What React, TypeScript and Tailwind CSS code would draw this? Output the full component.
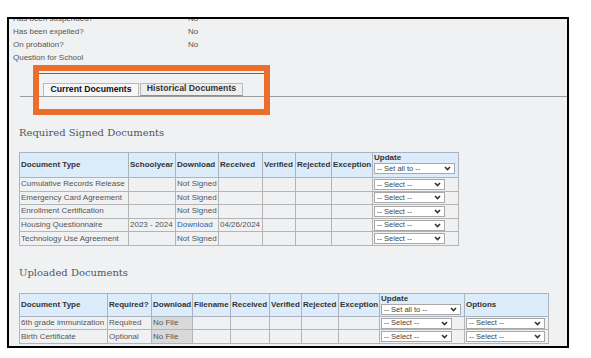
import React from 'react';

const FONT = { fontFamily: '"Liberation Sans", Arial, sans-serif' };

function Chevron() {
  return (
    <svg width="7" height="5" viewBox="0 0 7 5" className="shrink-0">
      <path d="M1 1 L3.5 3.5 L6 1" fill="none" stroke="#333" strokeWidth="1.6" />
    </svg>
  );
}

function Sel({ label, className = '' }: { label: string; className?: string }) {
  return (
    <div
      className={`flex items-center justify-between bg-white border border-[#a8a8a8] h-[11px] pl-[2px] pr-[3px] text-[7.5px] font-normal leading-none text-[#444] ${className}`}
    >
      <span>{label}</span>
      <Chevron />
    </div>
  );
}

const info = [
  ['Has been suspended?', 'No'],
  ['Has been expelled?', 'No'],
  ['On probation?', 'No'],
  ['Question for School', ''],
];

const required = [
  ['Cumulative Records Release', '', 'Not Signed', ''],
  ['Emergency Card Agreement', '', 'Not Signed', ''],
  ['Enrollment Certification', '', 'Not Signed', ''],
  ['Housing Questionnaire', '2023 - 2024', 'Download', '04/26/2024'],
  ['Technology Use Agreement', '', 'Not Signed', ''],
];

const uploaded = [
  ['6th grade immunization', 'Required'],
  ['Birth Certificate', 'Optional'],
];

const th = 'border border-[#aab4c0] bg-[#dcecfb] text-left font-bold text-[8px] text-[#333] px-[1px] leading-none whitespace-nowrap overflow-hidden';
const td = 'border border-[#b4b4b4] px-[1px] text-[8px] text-[#555] leading-none whitespace-nowrap overflow-hidden';

export default function App() {
  return (
    <div className="w-[591px] h-[358px] bg-white overflow-hidden" style={FONT}>
      <div className="relative ml-[7px] mt-[17px] w-[562px] h-[331px] border-2 border-black overflow-hidden bg-[#f0f1f3]">
        {/* student flags, page scrolled so first row is cut */}
        <div className="mt-[-6.5px] pl-[4px] text-[8px] text-[#555]">
          {info.map(([k, v]) => (
            <div key={k} className="flex h-[13px] items-center">
              <span className="w-[175px]">{k}</span>
              <span>{v}</span>
            </div>
          ))}
        </div>

        {/* tabs */}
        <div className="ml-[11px] mt-[18px] flex items-end gap-[1px] border-b-[1.5px] border-[#9b9b9b] pl-[23px]">
          <div className="w-[96px] h-[13px] flex items-center justify-center border border-b-0 border-[#b9b9b9] bg-[#f7f7f7] text-[8.7px] font-bold text-[#111]">
            Current Documents
          </div>
          <div className="w-[103px] h-[13px] flex items-center justify-center border border-[#b9b9b9] border-b-[#8f8f8f] bg-[#eeeeee] text-[8.7px] font-bold text-[#333]">
            Historical Documents
          </div>
        </div>

        {/* required signed documents */}
        <div className="pl-[10px]">
          <h2 className="mt-[30.5px] h-[12px] leading-[12px] text-[10px] text-[#555]" style={{ fontFamily: '"DejaVu Serif", serif' }}>
            Required Signed Documents
          </h2>
          <table className="mt-[13px] table-fixed w-[439px] border-collapse border border-[#9aa5b1]">
            <thead>
              <tr className="h-[25px]">
                <th className={`${th} w-[109px]`}>Document Type</th>
                <th className={`${th} w-[47px]`}>Schoolyear</th>
                <th className={`${th} w-[43px]`}>Download</th>
                <th className={`${th} w-[44px]`}>Received</th>
                <th className={`${th} w-[33px]`}>Verified</th>
                <th className={`${th} w-[36px]`}>Rejected</th>
                <th className={`${th} w-[41px]`}>Exception</th>
                <th className={`${th} w-[86px] align-top pt-[1px]`}>
                  <div className="mb-[1px]">Update</div>
                  <Sel label="-- Set all to --" className="w-[81px] h-[10px]" />
                </th>
              </tr>
            </thead>
            <tbody>
              {required.map(([name, year, dl, rec]) => (
                <tr key={name} className="h-[13.6px]">
                  <td className={td}>{name}</td>
                  <td className={td}>{year}</td>
                  <td className={td}>
                    {dl === 'Download' ? <span className="text-[#1f63b5]">Download</span> : dl}
                  </td>
                  <td className={td}>{rec}</td>
                  <td className={td}></td>
                  <td className={td}></td>
                  <td className={td}></td>
                  <td className={td}>
                    <Sel label="-- Select --" className="w-[71px]" />
                  </td>
                </tr>
              ))}
            </tbody>
          </table>

          {/* uploaded documents */}
          <h2 className="mt-[21px] h-[12px] leading-[12px] text-[10px] text-[#555]" style={{ fontFamily: '"DejaVu Serif", serif' }}>
            Uploaded Documents
          </h2>
          <table className="mt-[14px] table-fixed w-[529px] border-collapse border border-[#9aa5b1]">
            <thead>
              <tr className="h-[23px]">
                <th className={`${th} w-[88px]`}>Document Type</th>
                <th className={`${th} w-[44px]`}>Required?</th>
                <th className={`${th} w-[41px]`}>Download</th>
                <th className={`${th} w-[38px]`}>Filename</th>
                <th className={`${th} w-[39px]`}>Received</th>
                <th className={`${th} w-[32px]`}>Verified</th>
                <th className={`${th} w-[37px]`}>Rejected</th>
                <th className={`${th} w-[41px]`}>Exception</th>
                <th className={`${th} w-[85px] align-top pt-[1px]`}>
                  <div className="mb-[1px]">Update</div>
                  <Sel label="-- Set all to --" className="w-[80px] h-[10px]" />
                </th>
                <th className={`${th} w-[84px]`}>Options</th>
              </tr>
            </thead>
            <tbody>
              {uploaded.map(([name, req]) => (
                <tr key={name} className="h-[13.5px]">
                  <td className={td}>{name}</td>
                  <td className={td}>{req}</td>
                  <td className={`${td} bg-[#d9d9d9]`}>No File</td>
                  <td className={td}></td>
                  <td className={td}></td>
                  <td className={td}></td>
                  <td className={td}></td>
                  <td className={td}></td>
                  <td className={td}>
                    <Sel label="-- Select --" className="w-[71px]" />
                  </td>
                  <td className={td}>
                    <Sel label="-- Select --" className="w-[79px]" />
                  </td>
                </tr>
              ))}
            </tbody>
          </table>
        </div>

        {/* orange annotation over the tabs */}
        <div className="absolute left-[24px] top-[46px] w-[237px] h-[50px] border-[6px] border-[#ea6f2c]">
          <div className="mt-[2px] h-[1px] bg-[#e0392c]" />
        </div>
      </div>
    </div>
  );
}
